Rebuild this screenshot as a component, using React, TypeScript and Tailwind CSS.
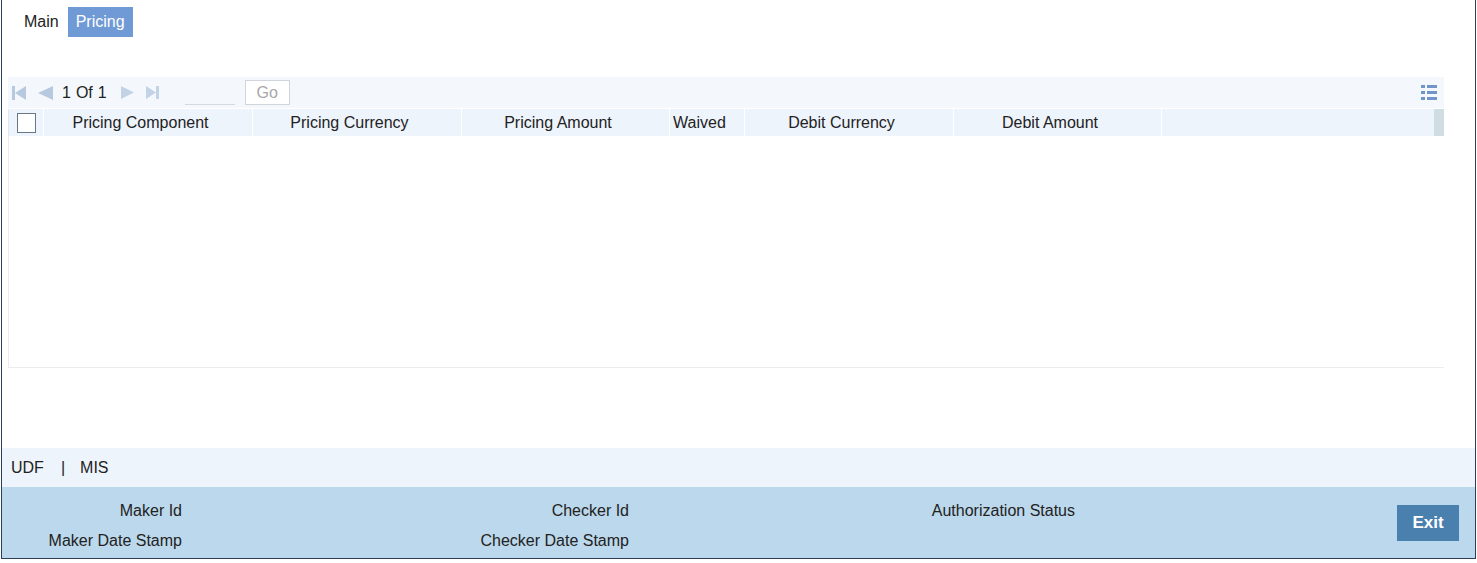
import React from 'react';

const font = { fontFamily: '"Liberation Sans", Arial, sans-serif' };

const columns = [
    { label: 'Pricing Component', w: 'w-[209px]' },
    { label: 'Pricing Currency', w: 'w-[209px]' },
    { label: 'Pricing Amount', w: 'w-[208px]' },
    { label: 'Waived', w: 'w-[75px]' },
    { label: 'Debit Currency', w: 'w-[209px]' },
    { label: 'Debit Amount', w: 'w-[208px]' },
];

const FirstIcon = () => (
    <svg width="14" height="14" viewBox="0 0 14 14">
        <rect x="0" y="0" width="3" height="14" fill="#b7c9df" />
        <polygon points="14,0 14,14 3,7" fill="#b7c9df" />
    </svg>
);

const PrevIcon = () => (
    <svg width="15" height="14" viewBox="0 0 15 14">
        <polygon points="15,0 15,14 0,7" fill="#b7c9df" />
    </svg>
);

const NextIcon = () => (
    <svg width="13" height="13" viewBox="0 0 13 13">
        <polygon points="0,0 0,13 13,6.5" fill="#c3d3e6" />
    </svg>
);

const LastIcon = () => (
    <svg width="13" height="13" viewBox="0 0 13 13">
        <polygon points="0,0 0,13 10,6.5" fill="#c3d3e6" />
        <rect x="10" y="0" width="3" height="13" fill="#c3d3e6" />
    </svg>
);

const MenuIcon = () => (
    <svg width="16" height="15" viewBox="0 0 16 15">
        <rect x="0" y="0" width="4" height="3" fill="#7096c8" />
        <rect x="6" y="0" width="10" height="3" fill="#7096c8" />
        <rect x="0" y="6" width="4" height="3" fill="#7096c8" />
        <rect x="6" y="6" width="10" height="3" fill="#7096c8" />
        <rect x="0" y="12" width="4" height="3" fill="#7096c8" />
        <rect x="6" y="12" width="10" height="3" fill="#7096c8" />
    </svg>
);

export default function App() {
    return (
        <div className="w-[1477px] h-[563px] bg-white text-[16px] text-[#222]" style={font}>
            <div className="ml-px w-[1475px] h-[559px] border-x border-b border-[#2c3e5a] flex flex-col">
                {/* tabs */}
                <div className="flex items-center pt-[7px] pl-[14px] h-[37px]">
                    <div className="h-[30px] pl-[8px] pr-[9px] flex items-center">Main</div>
                    <div className="h-[30px] px-[8px] flex items-center bg-[#6f9ad6] text-white">Pricing</div>
                </div>

                {/* grid */}
                <div className="mt-[40px] ml-[6px] w-[1436px]">
                    <div className="h-[31px] bg-[#f4f8fd] flex items-center pl-[4px] pr-[7px]">
                        <div className="flex items-center gap-[12px]">
                            <FirstIcon />
                            <PrevIcon />
                        </div>
                        <span className="ml-[9px]">1</span>
                        <span className="ml-[5px]">Of</span>
                        <span className="ml-[5px]">1</span>
                        <div className="ml-[14px] flex items-center gap-[12px]">
                            <NextIcon />
                            <LastIcon />
                        </div>
                        <div className="ml-[26px] w-[50px] h-[24px] border-b border-[#d5d9de]" />
                        <button className="ml-[10px] w-[45px] h-[25px] border border-[#cfd5db] bg-white text-[#a7a7a7]">Go</button>
                        <div className="ml-auto">
                            <MenuIcon />
                        </div>
                    </div>
                    <div className="h-px" />
                    <div className="h-[27px] bg-[#eef4fc] flex border-l border-[#e3e7ec]">
                        <div className="w-[35px] flex items-center justify-center border-r border-white">
                            <div className="w-[19px] h-[20px] bg-white border border-[#6a7886]" />
                        </div>
                        {columns.map((c) => (
                            <div key={c.label} className={`${c.w} flex items-center justify-center pr-[15px] border-r border-white`}>
                                {c.label}
                            </div>
                        ))}
                        <div className="flex-1" />
                        <div className="w-[10px] bg-[#d0dde3]" />
                    </div>
                    <div className="h-[232px] border-l border-b border-[#ececec]" />
                </div>

                <div className="flex-1" />

                {/* UDF | MIS */}
                <div className="h-[39px] bg-[#edf4fc] flex items-center pl-[9px]">
                    <span>UDF</span>
                    <span className="ml-[17px]">|</span>
                    <span className="ml-[15px]">MIS</span>
                </div>

                {/* footer */}
                <div className="h-[71px] bg-[#bcd8ec] flex">
                    <div className="w-[180px] pt-[9px] text-right leading-[30px]">
                        <div>Maker Id</div>
                        <div>Maker Date Stamp</div>
                    </div>
                    <div className="w-[447px] pt-[9px] text-right leading-[30px]">
                        <div>Checker Id</div>
                        <div>Checker Date Stamp</div>
                    </div>
                    <div className="w-[446px] pt-[9px] text-right leading-[30px]">
                        <div>Authorization Status</div>
                    </div>
                    <div className="flex-1" />
                    <button className="mt-[18px] mr-[16px] w-[62px] h-[36px] bg-[#4a80ae] text-white font-bold text-[17px]">
                        Exit
                    </button>
                </div>
            </div>
        </div>
    );
}
